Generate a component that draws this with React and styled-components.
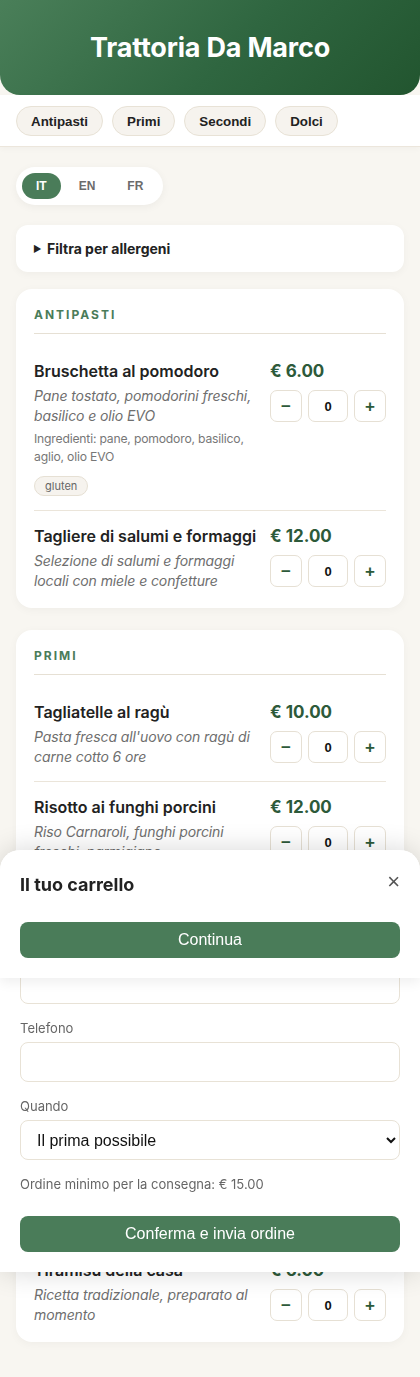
import React, { useLayoutEffect, useRef } from "react";
import styled, { createGlobalStyle } from "styled-components";

const GlobalStyle = createGlobalStyle`
  * { box-sizing: border-box; }
  html, body { margin: 0; padding: 0; }
  body {
    background: #f8f6f1;
    font-family: Inter, "Noto Sans", sans-serif;
    color: #222;
  }
`;

const Header = styled.header`
  height: 95px;
  display: flex;
  align-items: center;
  justify-content: center;
  background: linear-gradient(135deg, #4a7f59 0%, #2f6640 55%, #22552f 100%);
  border-radius: 0 0 20px 20px;
`;

const Title = styled.h1`
  margin: 0;
  color: #fff;
  font-size: 27px;
  font-weight: 700;
  letter-spacing: -0.2px;
`;

const CatNav = styled.nav`
  display: flex;
  gap: 9px;
  padding: 11px 16px 10px;
  background: #fff;
  border-bottom: 1px solid #ece6dc;
  box-shadow: 0 2px 6px rgba(0, 0, 0, 0.03);
`;

const Chip = styled.button`
  height: 30px;
  padding: 0 14px;
  border-radius: 999px;
  border: 1px solid #e8e2d6;
  background: #f6f3ee;
  color: #222;
  font-family: "Liberation Sans", Arial, sans-serif;
  font-weight: 700;
  font-size: 13.333px;
`;

const Main = styled.main`
  padding: 20px 16px 36px;
`;

const LangSwitch = styled.div`
  display: inline-flex;
  gap: 4px;
  padding: 6px;
  background: #fff;
  border-radius: 999px;
  box-shadow: 0 2px 8px rgba(0, 0, 0, 0.05);
`;

const LangBtn = styled.button`
  height: 26px;
  padding: 0 14px;
  border: none;
  border-radius: 999px;
  background: ${(p) => (p.$active ? "#4a7c59" : "transparent")};
  color: ${(p) => (p.$active ? "#fff" : "#6b6b6b")};
  font-family: "Liberation Sans", Arial, sans-serif;
  font-weight: 700;
  font-size: 12px;
`;

const FilterCard = styled.details`
  margin-top: 20px;
  background: #fff;
  border-radius: 12px;
  box-shadow: 0 2px 8px rgba(0, 0, 0, 0.04);
`;

const FilterSummary = styled.summary`
  list-style: none;
  display: flex;
  align-items: center;
  gap: 6px;
  padding: 15px 17px;
  font-size: 14px;
  font-weight: 700;
  line-height: 17px;
  color: #222;
  &::-webkit-details-marker { display: none; }
`;

const Marker = styled.span`
  font-size: 9px;
  width: 8px;
`;

const Section = styled.section`
  margin-top: ${(p) => p.$mt}px;
  background: #fff;
  border-radius: 16px;
  padding: 18px 18px 17px;
  box-shadow: 0 2px 10px rgba(0, 0, 0, 0.04);
`;

const SectionTitle = styled.h2`
  margin: 0 0 12px;
  padding-bottom: 10px;
  border-bottom: 1px solid #e6e0d4;
  color: #4a7c59;
  font-size: 12px;
  line-height: 16px;
  font-weight: 700;
  letter-spacing: 2px;
  text-transform: uppercase;
`;

const Item = styled.div`
  display: flex;
  gap: 12px;
  padding: 14px 0;
  border-bottom: 1px solid #ebe5da;
  &:last-child {
    border-bottom: none;
    padding-bottom: 0;
  }
`;

const ItemInfo = styled.div`
  flex: 1;
  min-width: 0;
`;

const ItemName = styled.div`
  font-size: 16px;
  line-height: 22px;
  font-weight: 600;
  color: #222;
`;

const ItemDesc = styled.div`
  margin-top: 4px;
  font-size: 14px;
  line-height: 20px;
  font-style: italic;
  color: #6e6e6e;
  letter-spacing: -0.1px;
`;

const Ingredients = styled.div`
  margin-top: 4px;
  font-size: 12.2px;
  line-height: 18px;
  letter-spacing: -0.2px;
  color: #777;
`;

const Tags = styled.div`
  margin-top: 10px;
  display: flex;
  gap: 6px;
`;

const Tag = styled.span`
  height: 20px;
  display: inline-flex;
  align-items: center;
  padding: 0 10px;
  border-radius: 999px;
  border: 1px solid #e6e0d4;
  background: #f6f3ee;
  color: #666;
  font-size: 11px;
`;

const ItemSide = styled.div`
  width: 116px;
  flex-shrink: 0;
`;

const Price = styled.div`
  font-size: 17px;
  line-height: 22px;
  font-weight: 700;
  color: #2d5a3a;
`;

const Qty = styled.div`
  margin-top: 8px;
  display: flex;
  gap: 6px;
`;

const QtyBtn = styled.button`
  width: 32px;
  height: 32px;
  padding: 0;
  border: 1px solid #e6e0d4;
  border-radius: 7px;
  background: #fff;
  color: #2d5a3a;
  font-family: "Liberation Sans", Arial, sans-serif;
  font-weight: 700;
  font-size: 17px;
  line-height: 1;
`;

const QtyValue = styled.div`
  width: 40px;
  height: 32px;
  display: flex;
  align-items: center;
  justify-content: center;
  border: 1px solid #e6e0d4;
  border-radius: 7px;
  background: #fff;
  font-family: "Liberation Sans", Arial, sans-serif;
  font-weight: 700;
  font-size: 13px;
  color: #111;
`;

const Sheet = styled.div`
  position: fixed;
  left: 0;
  right: 0;
  top: 850px;
  height: 422px;
  display: flex;
  flex-direction: column;
  background: #fff;
  border-radius: 20px 20px 0 0;
  box-shadow: 0 0 28px rgba(0, 0, 0, 0.16);
  overflow: hidden;
`;

const SheetHeader = styled.div`
  position: relative;
  z-index: 1;
  padding: 24px 20px 20px;
  background: #fff;
  box-shadow: 0 4px 12px rgba(0, 0, 0, 0.07);
`;

const SheetTop = styled.div`
  display: flex;
  justify-content: space-between;
  align-items: center;
`;

const SheetTitle = styled.h3`
  margin: 0;
  font-size: 18px;
  line-height: 22px;
  font-weight: 700;
  color: #222;
`;

const CloseBtn = styled.button`
  border: none;
  background: none;
  padding: 0;
  margin-top: -6px;
  color: #555;
  font-family: "Liberation Sans", Arial, sans-serif;
  font-size: 22px;
  line-height: 1;
`;

const PrimaryBtn = styled.button`
  width: 100%;
  height: 36px;
  margin-top: ${(p) => p.$mt || 0}px;
  border: none;
  border-radius: 8px;
  background: #4a7c59;
  color: #fff;
  font-family: "Liberation Sans", Arial, sans-serif;
  font-size: 16px;
`;

const SheetBody = styled.div`
  flex: 1;
  overflow-y: auto;
  padding: 0 20px 20px;
  scrollbar-width: none;
  &::-webkit-scrollbar { display: none; }
`;

const Field = styled.div`
  margin-top: 15px;
`;

const Label = styled.label`
  display: block;
  margin-bottom: 5px;
  font-size: 13px;
  line-height: 18px;
  color: #666;
`;

const Input = styled.input`
  display: block;
  width: 100%;
  height: 40px;
  border: 1px solid #e8e2d6;
  border-radius: 8px;
  background: #fff;
  padding: 0 12px;
  font-family: "Liberation Sans", Arial, sans-serif;
  font-size: 16px;
`;

const Select = styled.select`
  display: block;
  width: 100%;
  height: 40px;
  border: 1px solid #e8e2d6;
  border-radius: 8px;
  background: #fff;
  padding: 0 12px;
  font-family: "Liberation Sans", Arial, sans-serif;
  font-size: 16px;
  color: #111;
`;

const Note = styled.div`
  margin-top: 15px;
  font-size: 13px;
  line-height: 18px;
  color: #666;
`;

const CartEmpty = styled.div`
  padding: 16px 0 4px;
  font-size: 14px;
  color: #777;
`;

const menu = [
  {
    title: "Antipasti",
    mt: 17,
    items: [
      {
        name: "Bruschetta al pomodoro",
        price: "6.00",
        desc: "Pane tostato, pomodorini freschi, basilico e olio EVO",
        ingr: "Ingredienti: pane, pomodoro, basilico, aglio, olio EVO",
        tags: ["gluten"],
      },
      {
        name: "Tagliere di salumi e formaggi",
        price: "12.00",
        desc: "Selezione di salumi e formaggi locali con miele e confetture",
      },
    ],
  },
  {
    title: "Primi",
    mt: 22,
    items: [
      {
        name: "Tagliatelle al ragù",
        price: "10.00",
        desc: "Pasta fresca all'uovo con ragù di carne cotto 6 ore",
      },
      {
        name: "Risotto ai funghi porcini",
        price: "12.00",
        desc: "Riso Carnaroli, funghi porcini freschi, parmigiano",
      },
    ],
  },
  {
    title: "Secondi",
    mt: 22,
    items: [
      {
        name: "Tagliata di manzo",
        price: "18.00",
        desc: "Controfiletto di manzo alla griglia con rucola, pomodorini e scaglie di grana",
      },
      {
        name: "Pollo alla cacciatora",
        price: "14.00",
        desc: "Con olive e rosmarino",
      },
    ],
  },
  {
    title: "Dolci",
    mt: 22,
    items: [
      {
        name: "Tiramisù della casa",
        price: "6.00",
        desc: "Ricetta tradizionale, preparato al momento",
      },
    ],
  },
];

function MenuItem({ item }) {
  return (
    <Item>
      <ItemInfo>
        <ItemName>{item.name}</ItemName>
        <ItemDesc>{item.desc}</ItemDesc>
        {item.ingr && <Ingredients>{item.ingr}</Ingredients>}
        {item.tags && (
          <Tags>
            {item.tags.map((t) => (
              <Tag key={t}>{t}</Tag>
            ))}
          </Tags>
        )}
      </ItemInfo>
      <ItemSide>
        <Price>€ {item.price}</Price>
        <Qty>
          <QtyBtn>−</QtyBtn>
          <QtyValue>0</QtyValue>
          <QtyBtn>+</QtyBtn>
        </Qty>
      </ItemSide>
    </Item>
  );
}

export default function App() {
  const bodyRef = useRef(null);
  useLayoutEffect(() => {
    if (bodyRef.current) bodyRef.current.scrollTop = bodyRef.current.scrollHeight;
  }, []);

  return (
    <>
      <GlobalStyle />
      <Header>
        <Title>Trattoria Da Marco</Title>
      </Header>
      <CatNav>
        {["Antipasti", "Primi", "Secondi", "Dolci"].map((c) => (
          <Chip key={c}>{c}</Chip>
        ))}
      </CatNav>
      <Main>
        <LangSwitch>
          <LangBtn $active>IT</LangBtn>
          <LangBtn>EN</LangBtn>
          <LangBtn>FR</LangBtn>
        </LangSwitch>
        <FilterCard>
          <FilterSummary>
            <Marker>▶</Marker>
            Filtra per allergeni
          </FilterSummary>
        </FilterCard>
        {menu.map((s) => (
          <Section key={s.title} $mt={s.mt}>
            <SectionTitle>{s.title}</SectionTitle>
            {s.items.map((it) => (
              <MenuItem key={it.name} item={it} />
            ))}
          </Section>
        ))}
      </Main>
      <Sheet>
        <SheetHeader>
          <SheetTop>
            <SheetTitle>Il tuo carrello</SheetTitle>
            <CloseBtn aria-label="Chiudi">×</CloseBtn>
          </SheetTop>
          <PrimaryBtn $mt={26}>Continua</PrimaryBtn>
        </SheetHeader>
        <SheetBody ref={bodyRef}>
          <CartEmpty>Il carrello è vuoto</CartEmpty>
          <Field>
            <Label>Nome</Label>
            <Input />
          </Field>
          <Field>
            <Label>Telefono</Label>
            <Input />
          </Field>
          <Field>
            <Label>Quando</Label>
            <Select defaultValue="asap">
              <option value="asap">Il prima possibile</option>
            </Select>
          </Field>
          <Note>Ordine minimo per la consegna: € 15.00</Note>
          <PrimaryBtn $mt={23}>Conferma e invia ordine</PrimaryBtn>
        </SheetBody>
      </Sheet>
    </>
  );
}
